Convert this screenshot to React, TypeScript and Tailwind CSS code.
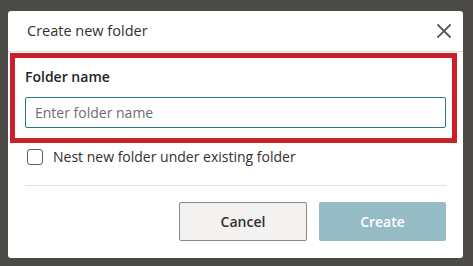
export default function App() {
  return (
    <div
      className="w-[473px] h-[266px] bg-[#4b4a47] pt-[11px] pl-[8px] text-[#323130]"
      style={{ fontFamily: '"Open Sans", "Noto Sans", sans-serif' }}
    >
      <div className="w-[455px] h-[247px] bg-white rounded-[3px] flex flex-col overflow-hidden">
        {/* header */}
        <div className="h-[41px] border-b border-[#e1dfdd] flex items-center justify-between pl-[19px] pr-[12px]">
          <h1 className="text-[14.5px] leading-[20px] text-[#323130]">Create new folder</h1>
          <button className="w-[14px] h-[14px] flex items-center justify-center" aria-label="Close">
            <svg width="14" height="14" viewBox="0 0 14 14" fill="none" stroke="#555" strokeWidth="1.8" strokeLinecap="square">
              <path d="M1 1 L13 13 M13 1 L1 13" />
            </svg>
          </button>
        </div>

        {/* body */}
        <div className="relative flex-1 flex flex-col px-[17px] pt-[15px]">
          <div className="absolute left-[2px] top-[1px] w-[447px] h-[90px] border-[5px] border-[#cc1f2a] pointer-events-none" />

          <label className="text-[14px] leading-[20px] font-semibold text-[#252423]">Folder name</label>
          <input
            className="mt-[10px] h-[31px] w-full rounded-[2px] border border-[#2b7787] px-[9px] text-[14px] outline-none placeholder:text-[#6f6d6b]"
            placeholder="Enter folder name"
          />

          <label className="mt-[19px] flex items-center h-[20px] ml-[2px] gap-[10px] text-[14px] leading-[20px] text-[#323130]">
            <span className="w-[16px] h-[16px] rounded-[3px] border border-[#605e5c] bg-white" />
            Nest new folder under existing folder
          </label>

          <div className="mt-[18px] h-px bg-[#e1dfdd]" />

          <div className="mt-[16px] flex justify-end gap-[12px]">
            <button className="w-[128px] h-[39px] rounded-[2px] border border-[#8a8886] bg-[#f3f2f1] text-[14px] font-semibold text-[#323130]">
              Cancel
            </button>
            <button className="w-[127px] h-[39px] rounded-[2px] bg-[#95bbc4] text-[14px] font-semibold text-white">
              Create
            </button>
          </div>
        </div>
      </div>
    </div>
  );
}
